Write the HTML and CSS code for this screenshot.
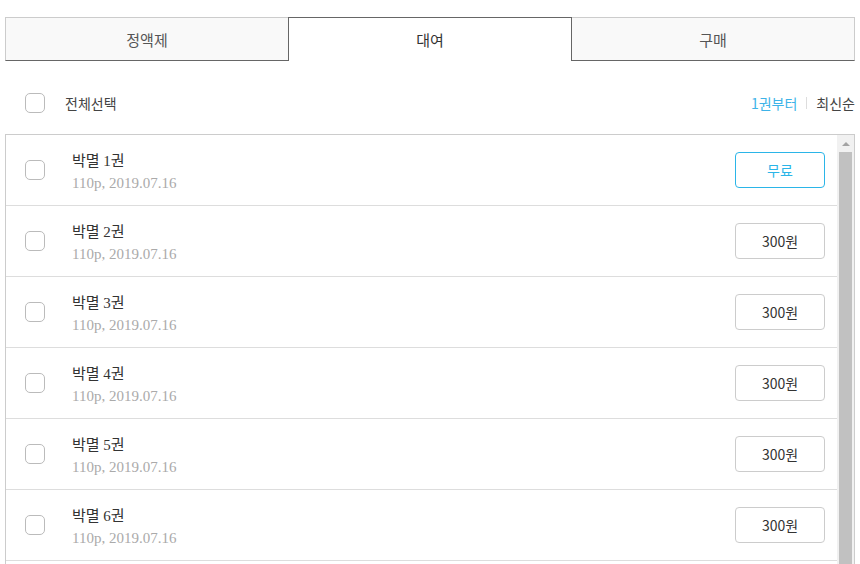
FILE: index.html
```html
<!DOCTYPE html>
<html lang="ko">
<head>
    <meta charset="UTF-8">
    <meta name="viewport" content="width=device-width, initial-scale=1.0">
    <title>박멸</title>
    <link rel="stylesheet" href="styles.css">
</head>
<body>
    <div class="tabs">
        <div class="tab">정액제</div>
        <div class="tab active">대여</div>
        <div class="tab">구매</div>
    </div>

    <div class="toolbar">
        <span class="check"></span>
        <span class="select-all">전체선택</span>
        <div class="sort">
            <span class="sort-on">1권부터</span>
            <span class="sort-bar"></span>
            <span>최신순</span>
        </div>
    </div>

    <div class="list">
        <ul class="episodes">
            <li><span class="check"></span><div class="info"><div class="title">박멸 1권</div><div class="meta">110p, 2019.07.16</div></div><button class="price free">무료</button></li>
            <li><span class="check"></span><div class="info"><div class="title">박멸 2권</div><div class="meta">110p, 2019.07.16</div></div><button class="price">300원</button></li>
            <li><span class="check"></span><div class="info"><div class="title">박멸 3권</div><div class="meta">110p, 2019.07.16</div></div><button class="price">300원</button></li>
            <li><span class="check"></span><div class="info"><div class="title">박멸 4권</div><div class="meta">110p, 2019.07.16</div></div><button class="price">300원</button></li>
            <li><span class="check"></span><div class="info"><div class="title">박멸 5권</div><div class="meta">110p, 2019.07.16</div></div><button class="price">300원</button></li>
            <li><span class="check"></span><div class="info"><div class="title">박멸 6권</div><div class="meta">110p, 2019.07.16</div></div><button class="price">300원</button></li>
        </ul>
        <div class="scrollbar">
            <span class="arrow"></span>
            <span class="thumb"></span>
        </div>
    </div>
</body>
</html>
```

FILE: styles.css
```css
body {
    font-family: 'Noto Sans CJK KR', 'Noto Sans', sans-serif;
    background-color: #ffffff;
    color: #333;
    margin: 0;
    padding: 17px 5px 0;
    overflow: hidden;
}
.tabs {
    display: flex;
    height: 44px;
}
.tab {
    flex: 1;
    display: flex;
    justify-content: center;
    align-items: center;
    font-size: 15px;
    color: #555;
    background-color: #f9f9f9;
    border: 1px solid #ccc;
    border-bottom: 1px solid #666;
    box-sizing: border-box;
}
.tab:first-child {
    border-right: none;
}
.tab:last-child {
    border-left: none;
}
.tab.active {
    background-color: #ffffff;
    color: #333;
    border: 1px solid #666;
    border-bottom: none;
}
.toolbar {
    display: flex;
    align-items: center;
    height: 63px;
    padding: 10px 0 0 20px;
}
.check {
    display: inline-block;
    width: 20px;
    height: 20px;
    border: 1px solid #bbb;
    border-radius: 5px;
    box-sizing: border-box;
    flex-shrink: 0;
}
.select-all {
    margin-left: 20px;
    font-size: 14px;
    color: #444;
}
.sort {
    margin-left: auto;
    display: flex;
    align-items: center;
    font-size: 14px;
    color: #444;
}
.sort-on {
    color: #3db3e8;
}
.sort-bar {
    width: 1px;
    height: 12px;
    background-color: #ddd;
    margin: 0 9px;
}
.list {
    display: flex;
    height: 431px;
    border: 1px solid #ccc;
    box-sizing: border-box;
    overflow: hidden;
}
.episodes {
    flex: 1;
    list-style: none;
    margin: 0;
    padding: 0;
}
.episodes li {
    display: flex;
    align-items: center;
    height: 70px;
    padding: 0 12px 0 19px;
    border-bottom: 1px solid #ddd;
}
.info {
    margin-left: 27px;
    padding-top: 4px;
    flex: 1;
}
.title {
    font-family: 'Liberation Serif', 'Noto Sans CJK KR', serif;
    font-size: 15px;
    color: #333;
    line-height: 22px;
}
.meta {
    font-family: 'Liberation Serif', serif;
    font-size: 15px;
    color: #aaa;
    line-height: 22px;
}
.price {
    width: 90px;
    height: 36px;
    background-color: #ffffff;
    border: 1px solid #ccc;
    border-radius: 4px;
    font-family: 'Noto Sans CJK KR', sans-serif;
    font-size: 14px;
    color: #333;
}
.price.free {
    border-color: #2bb5e8;
    color: #2bb5e8;
}
.scrollbar {
    width: 17px;
    display: flex;
    flex-direction: column;
    background-color: #f1f1f1;
}
.arrow {
    height: 17px;
    display: flex;
    justify-content: center;
    align-items: center;
}
.arrow::before {
    content: '';
    border-left: 4px solid transparent;
    border-right: 4px solid transparent;
    border-bottom: 4px solid #a3a3a3;
}
.thumb {
    flex: 1;
    margin: 0 2px;
    background-color: #c1c1c1;
}
```
